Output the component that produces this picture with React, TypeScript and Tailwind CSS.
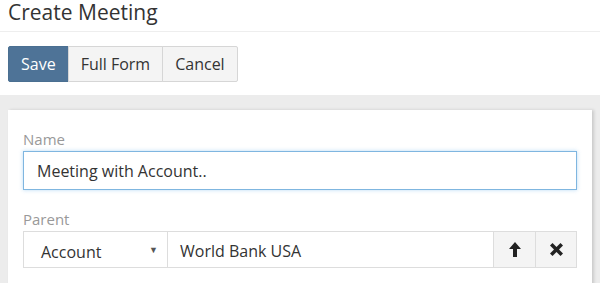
function UpIcon() {
  return (
    <svg width="12" height="15" viewBox="0 0 12 15" className="text-[#222]">
      <path d="M6 0 L12 7 L8 7 L8 15 L4 15 L4 7 L0 7 Z" fill="currentColor" />
    </svg>
  )
}

function RemoveIcon() {
  return (
    <svg width="13" height="13" viewBox="0 0 13 13" className="text-[#222]">
      <path
        d="M2.5 0 L6.5 4 L10.5 0 L13 2.5 L9 6.5 L13 10.5 L10.5 13 L6.5 9 L2.5 13 L0 10.5 L4 6.5 L0 2.5 Z"
        fill="currentColor"
      />
    </svg>
  )
}

export default function App() {
  return (
    <div className="h-[283px] w-[600px] overflow-hidden bg-white font-['Open_Sans',sans-serif] text-[#333]">
      <div className="h-[32px] border-b border-[#eee] px-2">
        <h1 className="text-[21px] leading-[25px]">Create Meeting</h1>
      </div>

      <div className="flex px-2 pt-[14px]">
        <button className="h-[36px] rounded-l-[2px] border border-[#4a6f91] bg-[#4e7397] px-3 text-[16px] text-white">
          Save
        </button>
        <button className="-ml-px h-[36px] border border-[#d6d6d6] bg-[#f4f4f4] px-3 text-[16px] text-[#333]">
          Full Form
        </button>
        <button className="-ml-px h-[36px] rounded-r-[2px] border border-[#d6d6d6] bg-[#f4f4f4] px-3 text-[16px] text-[#333]">
          Cancel
        </button>
      </div>

      <div className="mt-[13px] bg-[#ececec] pl-2 pr-2 pt-[15px]">
        <div className="bg-white px-[15px] pt-[19px] pb-6 shadow-[2px_0_3px_rgba(0,0,0,0.15)]">
          <label className="block text-[15px] leading-[20px] text-[#999]">Name</label>
          <div className="mt-[2px] flex h-[39px] items-center border border-[#7fb6e0] px-[13px] text-[16px] shadow-[0_0_4px_rgba(102,175,233,0.45)]">
            Meeting with Account..
          </div>

          <label className="mt-[19px] block text-[15px] leading-[20px] text-[#999]">Parent</label>
          <div className="mt-[2px] flex h-[37px] border border-[#ddd]">
            <div className="flex w-[144px] items-center justify-between border-r border-[#ddd] pl-[17px] pr-[9px] text-[16px]">
              <span className="pt-[4px]">Account</span>
              <span className="text-[9px] text-[#555]">▼</span>
            </div>
            <div className="flex flex-1 items-center pl-[12px] pt-[2px] text-[16px]">World Bank USA</div>
            <button className="flex w-[42px] items-center justify-center border-l border-[#ddd] bg-[#f4f4f4]">
              <UpIcon />
            </button>
            <button className="flex w-[41px] items-center justify-center border-l border-[#ddd] bg-[#f4f4f4]">
              <RemoveIcon />
            </button>
          </div>
        </div>
      </div>
    </div>
  )
}
